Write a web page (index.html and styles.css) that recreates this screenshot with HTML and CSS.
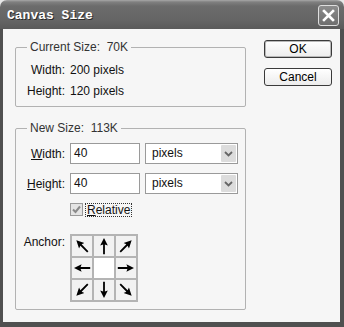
FILE: index.html
```html
<!DOCTYPE html>
<html lang="en">
<head>
    <meta charset="UTF-8">
    <title>Canvas Size</title>
    <link rel="stylesheet" href="styles.css">
</head>
<body>
    <svg width="0" height="0" class="defs">
        <symbol id="arrow" viewBox="0 0 20 20">
            <path d="M10 2 L13.8 9.6 L10.9 8.6 L10.9 18.2 L9.1 18.2 L9.1 8.6 L6.2 9.6 Z"/>
        </symbol>
    </svg>

    <div class="window">
        <div class="titlebar">
            <span class="title">Canvas Size</span>
            <span class="close">
                <svg width="19" height="19" viewBox="0 0 19 19"><path d="M5 5 L14 14 M14 5 L5 14" stroke="#fff" stroke-width="2.6" stroke-linecap="square"/></svg>
            </span>
        </div>
        <div class="client">
            <div class="groups">
                <fieldset class="group current">
                    <legend>Current Size:&nbsp; 70K</legend>
                    <div class="rows info">
                        <span class="label">Width:</span><span>200 pixels</span>
                        <span class="label">Height:</span><span>120 pixels</span>
                    </div>
                </fieldset>
                <fieldset class="group new">
                    <legend>New Size:&nbsp; 113K</legend>
                    <div class="rows form">
                        <span class="label"><u>W</u>idth:</span>
                        <div class="field">
                            <span class="input">40</span>
                            <span class="select">pixels<span class="drop"><svg width="9" height="6" viewBox="0 0 9 6"><path d="M1 1 L4.5 4.5 L8 1" fill="none" stroke="#666" stroke-width="1.8"/></svg></span></span>
                        </div>
                        <span class="label"><u>H</u>eight:</span>
                        <div class="field">
                            <span class="input">40</span>
                            <span class="select">pixels<span class="drop"><svg width="9" height="6" viewBox="0 0 9 6"><path d="M1 1 L4.5 4.5 L8 1" fill="none" stroke="#666" stroke-width="1.8"/></svg></span></span>
                        </div>
                        <span></span>
                        <div class="check">
                            <span class="box"><svg width="11" height="11" viewBox="0 0 11 11"><path d="M2 5.5 L4.5 8 L9 2.5" fill="none" stroke="#8a8a8a" stroke-width="2"/></svg></span>
                            <span class="focus"><u>R</u>elative</span>
                        </div>
                        <span class="label anchor-label">Anchor:</span>
                        <div class="anchor">
                            <span class="cell"><svg class="r315"><use href="#arrow"/></svg></span>
                            <span class="cell"><svg><use href="#arrow"/></svg></span>
                            <span class="cell"><svg class="r45"><use href="#arrow"/></svg></span>
                            <span class="cell"><svg class="r270"><use href="#arrow"/></svg></span>
                            <span class="cell center"></span>
                            <span class="cell"><svg class="r90"><use href="#arrow"/></svg></span>
                            <span class="cell"><svg class="r225"><use href="#arrow"/></svg></span>
                            <span class="cell"><svg class="r180"><use href="#arrow"/></svg></span>
                            <span class="cell"><svg class="r135"><use href="#arrow"/></svg></span>
                        </div>
                    </div>
                </fieldset>
            </div>
            <div class="buttons">
                <button class="btn default">OK</button>
                <button class="btn">Cancel</button>
            </div>
        </div>
    </div>
</body>
</html>
```

FILE: styles.css
```css
body {
    margin: 0;
    background: #e8e8e8;
    font-family: 'Liberation Sans', Arial, sans-serif;
    font-size: 12px;
    color: #111;
}
.defs {
    position: absolute;
}
.window {
    width: 344px;
    height: 327px;
    display: flex;
    flex-direction: column;
}
.titlebar {
    height: 29px;
    flex: none;
    display: flex;
    align-items: center;
    justify-content: space-between;
    padding: 0 5px 0 7px;
    border-radius: 7px 7px 0 0;
    background: linear-gradient(to bottom, #a8a8a8 0, #808080 2px, #6c6c6c 6px, #656565 20px, #5a5a5a 29px);
}
.title {
    font-family: 'Liberation Mono', 'Courier New', monospace;
    font-weight: bold;
    font-size: 13px;
    color: #fff;
    text-shadow: 1px 1px 0 #2a2a2a;
    margin-top: 2px;
}
.close {
    width: 19px;
    height: 19px;
    border: 1px solid #dedede;
    border-radius: 3px;
    background: linear-gradient(to bottom, #8c8c8c, #6e6e6e);
    margin-top: 1px;
}
.close svg {
    display: block;
}
.client {
    flex: 1;
    display: flex;
    gap: 18px;
    background: #f6f6f6;
    border-left: 3px solid #505050;
    border-right: 4px solid #505050;
    border-bottom: 5px solid #505050;
    padding: 11px 0 0 12px;
}
.groups {
    width: 231px;
    display: flex;
    flex-direction: column;
    gap: 14px;
}
.group {
    margin: 0;
    min-width: 0;
    border: 1px solid #b2b2b2;
    border-radius: 2px;
    padding: 0;
}
.group legend {
    margin-left: 11px;
    padding: 0 3px;
    line-height: 14px;
    color: #333;
}
.current {
    padding: 6px 0 4px;
}
.new {
    padding: 8px 0 7px;
}
.rows {
    display: grid;
    grid-template-columns: 49px auto;
    column-gap: 5px;
}
.label {
    text-align: right;
}
.info {
    line-height: 21px;
}
.form {
    row-gap: 9px;
    align-items: center;
}
.field {
    display: flex;
    gap: 5px;
}
.input, .select {
    box-sizing: border-box;
    height: 21px;
    line-height: 19px;
    border: 1px solid #9a9a9a;
    background: #fff;
    padding-left: 3px;
}
.input {
    width: 70px;
}
.select {
    width: 93px;
    padding-left: 6px;
    display: flex;
    justify-content: space-between;
}
.drop {
    width: 15px;
    height: 17px;
    margin: 1px;
    background: #dcdcdc;
    border-radius: 1px;
    display: flex;
    align-items: center;
    justify-content: center;
}
.check {
    display: flex;
    align-items: center;
    gap: 2px;
    height: 13px;
}
.box {
    box-sizing: border-box;
    width: 13px;
    height: 13px;
    border: 1px solid #9a9a9a;
    background: #e4e4e4;
}
.box svg {
    display: block;
}
.focus {
    line-height: 12px;
    border: 1px dotted #333;
    padding: 0 1px;
}
.anchor-label {
    align-self: start;
    margin-top: 10px;
}
.anchor {
    margin-top: 9px;
    width: 68px;
    box-sizing: border-box;
    display: grid;
    grid-template-columns: repeat(3, 20px);
    grid-auto-rows: 20px;
    gap: 2px;
    padding: 2px;
    background: #b4b4b4;
}
.cell {
    background: #f2f2f2;
}
.cell.center {
    background: #fff;
}
.cell svg {
    display: block;
    width: 20px;
    height: 20px;
    fill: #000;
}
.r45 { transform: rotate(45deg); }
.r90 { transform: rotate(90deg); }
.r135 { transform: rotate(135deg); }
.r180 { transform: rotate(180deg); }
.r225 { transform: rotate(225deg); }
.r270 { transform: rotate(270deg); }
.r315 { transform: rotate(315deg); }
.buttons {
    width: 68px;
    display: flex;
    flex-direction: column;
    gap: 10px;
}
.btn {
    height: 18px;
    padding: 0;
    font-family: 'Liberation Sans', Arial, sans-serif;
    font-size: 12px;
    color: #000;
    border: 1px solid #3a3a3a;
    border-radius: 3px;
    background: linear-gradient(to bottom, #fff, #ececec);
}
.btn.default {
    box-shadow: inset 0 0 0 1px #b8b8b8;
}
```
